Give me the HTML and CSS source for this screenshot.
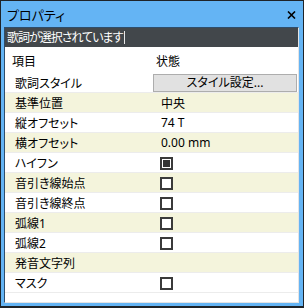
FILE: index.html
```html
<!DOCTYPE html>
<html lang="ja">
<head>
    <meta charset="UTF-8">
    <title>プロパティ</title>
    <link rel="stylesheet" href="styles.css">
</head>
<body>
<div class="window">
    <div class="titlebar">
        <span class="title">プロパティ</span>
        <svg class="close" width="9" height="8" viewBox="0 0 9 8">
            <path d="M1 0.5 L8 7.5 M8 0.5 L1 7.5" stroke="#000" stroke-width="1.6" fill="none"/>
        </svg>
    </div>
    <div class="panel">
        <div class="status">歌詞が選択されています<span class="caret"></span></div>
        <div class="list">
            <div class="row head">
                <div class="name">項目</div>
                <div class="value">状態</div>
            </div>
            <div class="row">
                <div class="name">歌詞スタイル</div>
                <div class="value"><button class="btn">スタイル設定...</button></div>
            </div>
            <div class="row alt">
                <div class="name">基準位置</div>
                <div class="value">中央</div>
            </div>
            <div class="row">
                <div class="name">縦オフセット</div>
                <div class="value">74 T</div>
            </div>
            <div class="row alt">
                <div class="name">横オフセット</div>
                <div class="value">0.00 mm</div>
            </div>
            <div class="row">
                <div class="name">ハイフン</div>
                <div class="value"><span class="check on"></span></div>
            </div>
            <div class="row alt">
                <div class="name">音引き線始点</div>
                <div class="value"><span class="check"></span></div>
            </div>
            <div class="row">
                <div class="name">音引き線終点</div>
                <div class="value"><span class="check"></span></div>
            </div>
            <div class="row alt">
                <div class="name">弧線1</div>
                <div class="value"><span class="check"></span></div>
            </div>
            <div class="row">
                <div class="name">弧線2</div>
                <div class="value"><span class="check"></span></div>
            </div>
            <div class="row alt">
                <div class="name">発音文字列</div>
                <div class="value"></div>
            </div>
            <div class="row">
                <div class="name">マスク</div>
                <div class="value"><span class="check"></span></div>
            </div>
        </div>
    </div>
</div>
</body>
</html>
```

FILE: styles.css
```css
body{margin:0;}
.window{
    width:304px;
    height:308px;
    box-sizing:border-box;
    border:1px solid #1e2328;
    border-bottom-width:2px;
    background:#64b4f4;
    display:flex;
    flex-direction:column;
    font-family:"Noto Sans","Noto Sans CJK JP",sans-serif;
    font-feature-settings:"palt";
    color:#000;
}
.titlebar{
    height:26px;
    display:flex;
    align-items:center;
    justify-content:space-between;
    padding:0 7px 0 6px;
}
.title{font-size:13px;}
.close{margin-top:1px;}
.panel{
    flex:1;
    margin:0 4px 3px 3px;
    border:1px solid;
    border-color:#2e4d6b #e4e4e4 #e4e4e4 #2e4d6b;
    display:flex;
    flex-direction:column;
}
.status{
    height:19px;
    background:#42474b;
    color:#fff;
    font-size:12px;
    letter-spacing:-1px;
    line-height:19px;
    padding-left:2px;
    display:flex;
    align-items:center;
}
.caret{display:inline-block;width:1px;height:13px;background:#e8e8e8;margin-left:2px;}
.list{flex:1;background:#fff;}
.row{
    height:20px;
    box-sizing:border-box;
    border-bottom:1px solid #ececec;
    display:flex;
    align-items:center;
    font-size:12px;
}
.row.alt{background:#f4f4dc;}
.row.head{height:26px;border-bottom:none;padding-top:1px;}
.name{width:138px;padding-left:10px;}
.row.head .name{padding-left:7px;}
.value{flex:1;padding-left:8px;display:flex;align-items:center;}
.row.head .value{padding-left:6px;}
.btn{
    margin:0 1px 0 -7px;
    width:144px;
    height:18px;
    padding:0;
    border:1px solid #adadad;
    background:#e1e1e1;
    font:12px "Noto Sans","Noto Sans CJK JP",sans-serif;
    font-feature-settings:"palt";
    color:#000;
    line-height:16px;
}
.check{
    width:9px;
    height:9px;
    border:2px solid #3a3a3a;
    margin:2px 0 0 -1px;
    display:flex;
    align-items:center;
    justify-content:center;
    background:#fff;
}
.check.on:after{content:"";width:7px;height:7px;background:#333;}
```
